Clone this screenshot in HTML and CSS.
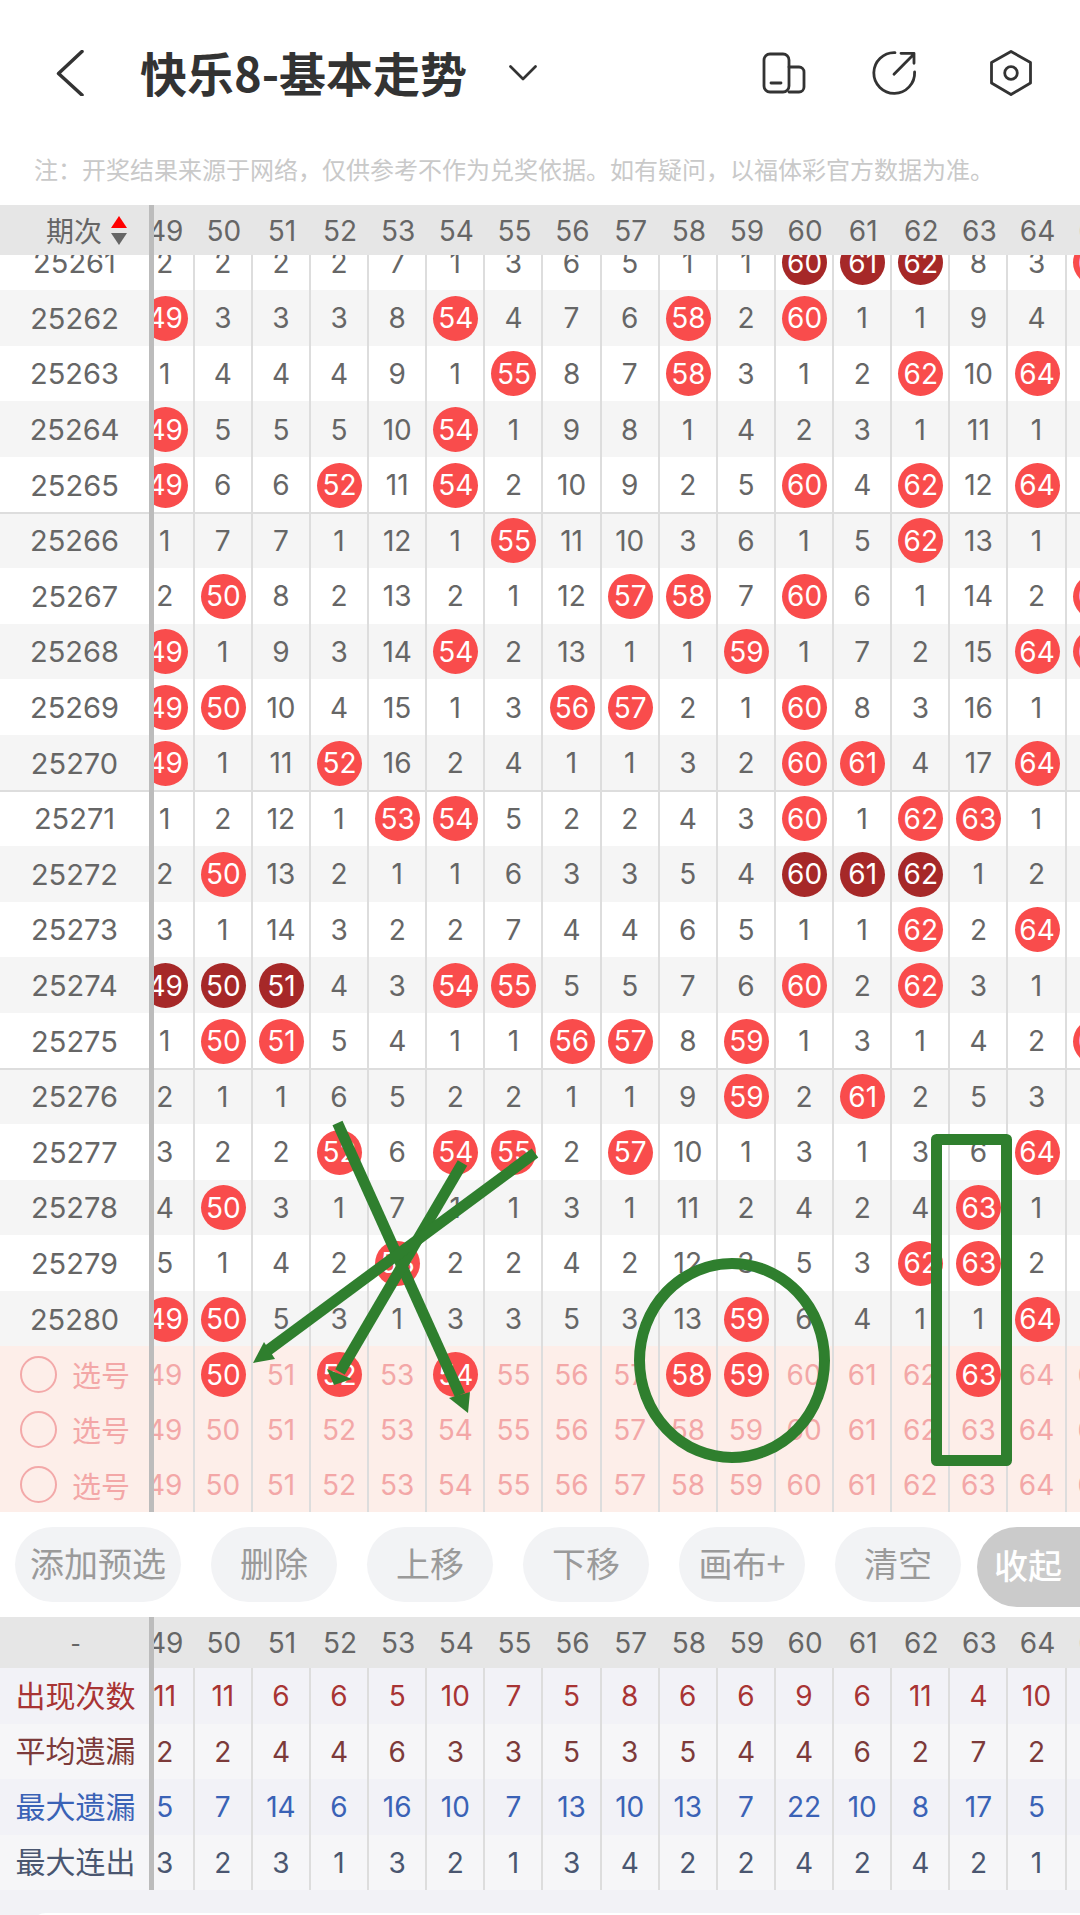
FILE: index.html
```html
<!DOCTYPE html>
<html lang="zh-CN">
<head>
<meta charset="utf-8">
<title>快乐8-基本走势</title>
<link rel="stylesheet" href="styles.css">
</head>
<body>
<div class="page">
  <header class="top">
    <svg class="back" viewBox="0 0 28 46"><path d="M26 1.5 2.5 23.5 26 45"/></svg>
    <h1>快乐8-基本走势</h1>
    <svg class="caret" viewBox="0 0 28 16"><path d="M1.5 1.5 14 14 26.500 1.500"/></svg>
    <svg class="ico ico1" viewBox="0 0 46 46"><rect x="3" y="4" width="25" height="38" rx="6"/><path d="M28 17h10a5 5 0 0 1 5 5v15a5 5 0 0 1-5 5H28M10 33h10"/></svg>
    <svg class="ico ico2" viewBox="0 0 46 46"><path d="M43.600 22A20.400 20.400 0 1 1 24 2.600M23 24.300 43 4M30 3.300H43V13.300"/></svg>
    <svg class="ico ico3" viewBox="0 0 46 48"><path d="M23 2.500 42.500 13.500V34L23 45.500 3.500 34V13.500Z"/><circle cx="23" cy="24" r="6.300"/></svg>
  </header>
  <p class="note">注：开奖结果来源于网络，仅供参考不作为兑奖依据。如有疑问，以福体彩官方数据为准。</p>

  <div class="r head">
    <div class="k"><span>期次</span><span class="sort"><em class="up"></em><em class="dn"></em></span></div>
    <div class="n"><i>49</i><i>50</i><i>51</i><i>52</i><i>53</i><i>54</i><i>55</i><i>56</i><i>57</i><i>58</i><i>59</i><i>60</i><i>61</i><i>62</i><i>63</i><i>64</i><i>65</i></div>
  </div>

  <div class="body">
    <div class="draws">
      <div class="r"><div class="k">25261</div><div class="n"><i>2</i><i>2</i><i>2</i><i>2</i><i>7</i><i>1</i><i>3</i><i>6</i><i>5</i><i>1</i><i>1</i><i><b class="d">60</b></i><i><b class="d">61</b></i><i><b class="d">62</b></i><i>8</i><i>3</i><i><b>65</b></i></div></div>
      <div class="r"><div class="k">25262</div><div class="n"><i><b>49</b></i><i>3</i><i>3</i><i>3</i><i>8</i><i><b>54</b></i><i>4</i><i>7</i><i>6</i><i><b>58</b></i><i>2</i><i><b>60</b></i><i>1</i><i>1</i><i>9</i><i>4</i><i></i></div></div>
      <div class="r"><div class="k">25263</div><div class="n"><i>1</i><i>4</i><i>4</i><i>4</i><i>9</i><i>1</i><i><b>55</b></i><i>8</i><i>7</i><i><b>58</b></i><i>3</i><i>1</i><i>2</i><i><b>62</b></i><i>10</i><i><b>64</b></i><i></i></div></div>
      <div class="r"><div class="k">25264</div><div class="n"><i><b>49</b></i><i>5</i><i>5</i><i>5</i><i>10</i><i><b>54</b></i><i>1</i><i>9</i><i>8</i><i>1</i><i>4</i><i>2</i><i>3</i><i>1</i><i>11</i><i>1</i><i></i></div></div>
      <div class="r"><div class="k">25265</div><div class="n"><i><b>49</b></i><i>6</i><i>6</i><i><b>52</b></i><i>11</i><i><b>54</b></i><i>2</i><i>10</i><i>9</i><i>2</i><i>5</i><i><b>60</b></i><i>4</i><i><b>62</b></i><i>12</i><i><b>64</b></i><i></i></div></div>
      <div class="r sep"><div class="k">25266</div><div class="n"><i>1</i><i>7</i><i>7</i><i>1</i><i>12</i><i>1</i><i><b>55</b></i><i>11</i><i>10</i><i>3</i><i>6</i><i>1</i><i>5</i><i><b>62</b></i><i>13</i><i>1</i><i></i></div></div>
      <div class="r"><div class="k">25267</div><div class="n"><i>2</i><i><b>50</b></i><i>8</i><i>2</i><i>13</i><i>2</i><i>1</i><i>12</i><i><b>57</b></i><i><b>58</b></i><i>7</i><i><b>60</b></i><i>6</i><i>1</i><i>14</i><i>2</i><i><b>65</b></i></div></div>
      <div class="r"><div class="k">25268</div><div class="n"><i><b>49</b></i><i>1</i><i>9</i><i>3</i><i>14</i><i><b>54</b></i><i>2</i><i>13</i><i>1</i><i>1</i><i><b>59</b></i><i>1</i><i>7</i><i>2</i><i>15</i><i><b>64</b></i><i><b>65</b></i></div></div>
      <div class="r"><div class="k">25269</div><div class="n"><i><b>49</b></i><i><b>50</b></i><i>10</i><i>4</i><i>15</i><i>1</i><i>3</i><i><b>56</b></i><i><b>57</b></i><i>2</i><i>1</i><i><b>60</b></i><i>8</i><i>3</i><i>16</i><i>1</i><i></i></div></div>
      <div class="r"><div class="k">25270</div><div class="n"><i><b>49</b></i><i>1</i><i>11</i><i><b>52</b></i><i>16</i><i>2</i><i>4</i><i>1</i><i>1</i><i>3</i><i>2</i><i><b>60</b></i><i><b>61</b></i><i>4</i><i>17</i><i><b>64</b></i><i></i></div></div>
      <div class="r sep"><div class="k">25271</div><div class="n"><i>1</i><i>2</i><i>12</i><i>1</i><i><b>53</b></i><i><b>54</b></i><i>5</i><i>2</i><i>2</i><i>4</i><i>3</i><i><b>60</b></i><i>1</i><i><b>62</b></i><i><b>63</b></i><i>1</i><i></i></div></div>
      <div class="r"><div class="k">25272</div><div class="n"><i>2</i><i><b>50</b></i><i>13</i><i>2</i><i>1</i><i>1</i><i>6</i><i>3</i><i>3</i><i>5</i><i>4</i><i><b class="d">60</b></i><i><b class="d">61</b></i><i><b class="d">62</b></i><i>1</i><i>2</i><i></i></div></div>
      <div class="r"><div class="k">25273</div><div class="n"><i>3</i><i>1</i><i>14</i><i>3</i><i>2</i><i>2</i><i>7</i><i>4</i><i>4</i><i>6</i><i>5</i><i>1</i><i>1</i><i><b>62</b></i><i>2</i><i><b>64</b></i><i></i></div></div>
      <div class="r"><div class="k">25274</div><div class="n"><i><b class="d">49</b></i><i><b class="d">50</b></i><i><b class="d">51</b></i><i>4</i><i>3</i><i><b>54</b></i><i><b>55</b></i><i>5</i><i>5</i><i>7</i><i>6</i><i><b>60</b></i><i>2</i><i><b>62</b></i><i>3</i><i>1</i><i></i></div></div>
      <div class="r"><div class="k">25275</div><div class="n"><i>1</i><i><b>50</b></i><i><b>51</b></i><i>5</i><i>4</i><i>1</i><i>1</i><i><b>56</b></i><i><b>57</b></i><i>8</i><i><b>59</b></i><i>1</i><i>3</i><i>1</i><i>4</i><i>2</i><i><b>65</b></i></div></div>
      <div class="r sep"><div class="k">25276</div><div class="n"><i>2</i><i>1</i><i>1</i><i>6</i><i>5</i><i>2</i><i>2</i><i>1</i><i>1</i><i>9</i><i><b>59</b></i><i>2</i><i><b>61</b></i><i>2</i><i>5</i><i>3</i><i></i></div></div>
      <div class="r"><div class="k">25277</div><div class="n"><i>3</i><i>2</i><i>2</i><i><b>52</b></i><i>6</i><i><b>54</b></i><i><b>55</b></i><i>2</i><i><b>57</b></i><i>10</i><i>1</i><i>3</i><i>1</i><i>3</i><i>6</i><i><b>64</b></i><i></i></div></div>
      <div class="r"><div class="k">25278</div><div class="n"><i>4</i><i><b>50</b></i><i>3</i><i>1</i><i>7</i><i>1</i><i>1</i><i>3</i><i>1</i><i>11</i><i>2</i><i>4</i><i>2</i><i>4</i><i><b>63</b></i><i>1</i><i></i></div></div>
      <div class="r"><div class="k">25279</div><div class="n"><i>5</i><i>1</i><i>4</i><i>2</i><i><b>53</b></i><i>2</i><i>2</i><i>4</i><i>2</i><i>12</i><i>3</i><i>5</i><i>3</i><i><b>62</b></i><i><b>63</b></i><i>2</i><i></i></div></div>
      <div class="r"><div class="k">25280</div><div class="n"><i><b>49</b></i><i><b>50</b></i><i>5</i><i>3</i><i>1</i><i>3</i><i>3</i><i>5</i><i>3</i><i>13</i><i><b>59</b></i><i>6</i><i>4</i><i>1</i><i>1</i><i><b>64</b></i><i></i></div></div>
    </div>
    <div class="picks">
      <div class="r"><div class="k"><span class="radio"></span><span>选号</span></div><div class="n"><i>49</i><i><b>50</b></i><i>51</i><i><b>52</b></i><i>53</i><i><b>54</b></i><i>55</i><i>56</i><i>57</i><i><b>58</b></i><i><b>59</b></i><i>60</i><i>61</i><i>62</i><i><b>63</b></i><i>64</i><i>65</i></div></div>
      <div class="r"><div class="k"><span class="radio"></span><span>选号</span></div><div class="n"><i>49</i><i>50</i><i>51</i><i>52</i><i>53</i><i>54</i><i>55</i><i>56</i><i>57</i><i>58</i><i>59</i><i>60</i><i>61</i><i>62</i><i>63</i><i>64</i><i>65</i></div></div>
      <div class="r"><div class="k"><span class="radio"></span><span>选号</span></div><div class="n"><i>49</i><i>50</i><i>51</i><i>52</i><i>53</i><i>54</i><i>55</i><i>56</i><i>57</i><i>58</i><i>59</i><i>60</i><i>61</i><i>62</i><i>63</i><i>64</i><i>65</i></div></div>
    </div>
  </div>

  <div class="actions">
    <button class="wide">添加预选</button>
    <button>删除</button>
    <button>上移</button>
    <button>下移</button>
    <button>画布+</button>
    <button>清空</button>
    <button class="fold">收起</button>
  </div>

  <div class="stats">
    <div class="r head"><div class="k">-</div><div class="n"><i>49</i><i>50</i><i>51</i><i>52</i><i>53</i><i>54</i><i>55</i><i>56</i><i>57</i><i>58</i><i>59</i><i>60</i><i>61</i><i>62</i><i>63</i><i>64</i><i>65</i></div></div>
    <div class="r s1"><div class="k">出现次数</div><div class="n"><i>11</i><i>11</i><i>6</i><i>6</i><i>5</i><i>10</i><i>7</i><i>5</i><i>8</i><i>6</i><i>6</i><i>9</i><i>6</i><i>11</i><i>4</i><i>10</i><i></i></div></div>
    <div class="r s2"><div class="k">平均遗漏</div><div class="n"><i>2</i><i>2</i><i>4</i><i>4</i><i>6</i><i>3</i><i>3</i><i>5</i><i>3</i><i>5</i><i>4</i><i>4</i><i>6</i><i>2</i><i>7</i><i>2</i><i></i></div></div>
    <div class="r s3"><div class="k">最大遗漏</div><div class="n"><i>5</i><i>7</i><i>14</i><i>6</i><i>16</i><i>10</i><i>7</i><i>13</i><i>10</i><i>13</i><i>7</i><i>22</i><i>10</i><i>8</i><i>17</i><i>5</i><i></i></div></div>
    <div class="r s4"><div class="k">最大连出</div><div class="n"><i>3</i><i>2</i><i>3</i><i>1</i><i>3</i><i>2</i><i>1</i><i>3</i><i>4</i><i>2</i><i>2</i><i>4</i><i>2</i><i>4</i><i>2</i><i>1</i><i></i></div></div>
  </div>
  <div class="foot"><div class="card"></div></div>

  <svg class="marks" viewBox="0 0 1080 1915">
    <path class="ln" d="M337.500 1123 460 1395"/>
    <polygon class="hd" points="468,1413 449,1398 470,1392"/>
    <path class="ln" d="M462.500 1163 340 1372"/>
    <polygon class="hd" points="334,1385 327,1369 352,1379"/>
    <path class="ln" d="M535 1153 267 1351"/>
    <polygon class="hd" points="253,1363 264,1342 275,1359"/>
    <ellipse class="ln" cx="732" cy="1360.500" rx="92.500" ry="97"/>
    <rect class="ln box" x="936.500" y="1139.500" width="70" height="321"/>
  </svg>
</div>
</body>
</html>
```
FILE: styles.css
```css
* { box-sizing: border-box; }
html, body { margin: 0; padding: 0; background: #fff; }
.page {
  position: relative;
  width: 1080px;
  height: 1915px;
  overflow: hidden;
  font-family: "Noto Sans CJK SC", "Noto Sans", sans-serif;
  color: #666;
}

/* top bar */
.top { display: flex; align-items: center; height: 146px; padding: 0 46px 0 56px; }
.top svg { fill: none; stroke: #333; stroke-linecap: round; stroke-linejoin: round; flex: none; }
.back { width: 28px; height: 46px; margin-right: 56px; stroke-width: 3.5; }
.top h1 { margin: 0 0 3px; font-size: 47px; font-weight: 700; color: #333; line-height: 1; white-space: nowrap; }
.caret { width: 28px; height: 16px; margin-left: 42px; stroke-width: 2.7; }
.ico { width: 46px; height: 46px; stroke-width: 2.8; }
.ico3 { height: 48px; }
.ico1 { margin-left: auto; }
.ico2 { margin-left: 64px; }
.ico3 { margin-left: 71px; }

.note { margin: 0; height: 59px; padding: 7px 0 0 34px; font-size: 24px; line-height: 32px; color: #c9c9c9; white-space: nowrap; }

/* table rows */
.r { display: flex; height: 55.6px; background: #fff; }
.k {
  flex: 0 0 154px;
  display: flex;
  align-items: center;
  justify-content: center;
  padding-top: 1px;
  border-right: 5px solid #bcbcbc;
  font-family: Inter, "Noto Sans CJK SC", sans-serif;
  font-size: 29px;
}
.n { flex: 1; min-width: 0; display: flex; overflow: hidden; }
.n i {
  flex: 0 0 58.13px;
  display: flex;
  align-items: center;
  justify-content: center;
  padding-top: 1px;
  border-right: 2px solid #ddd;
  font: normal 28px/1 Inter, "Noto Sans", sans-serif;
}
.n i:first-child { margin-left: -17.400px; }
.n b {
  flex: none;
  width: 45px;
  height: 45px;
  border-radius: 50%;
  display: flex;
  align-items: center;
  justify-content: center;
  margin-right: -1px;
  background: #f94c4c;
  color: #fff;
  font-weight: 400;
}
.n b.d { background: #a62828; }

.head { height: 50px; background: #e6e6e6; }
.head .k { justify-content: flex-start; padding: 0 0 0 46px; font-family: "Noto Sans CJK SC", sans-serif; font-size: 28px; }
.head .n i { border-right: 0; }
.sort { display: flex; flex-direction: column; gap: 5px; margin-left: 9px; }
.sort em { display: block; width: 0; height: 0; border-left: 8px solid transparent; border-right: 8px solid transparent; }
.sort .up { border-bottom: 12px solid #f00; }
.sort .dn { border-top: 12px solid #666; }

.body { height: 1257px; overflow: hidden; }
.draws { margin-top: -20.500px; }
.draws .r:nth-child(even) { background: #f5f5f5; }
.draws .r.sep { box-shadow: inset 0 2px #ddd; }

.picks .r { height: 55.330px; background: #fdeee9; color: #f3a7a7; }
.picks .k { font-family: "Noto Sans CJK SC", sans-serif; justify-content: flex-start; padding: 0 0 0 20px; font-size: 29px; gap: 15px; }
.radio { flex: none; width: 37px; height: 37px; border: 2px solid #f3a9a9; border-radius: 50%; }

/* buttons */
.actions { display: flex; align-items: flex-start; gap: 30px; height: 105px; padding: 15px 0 0 15px; }
.actions button {
  flex: 0 0 126px;
  height: 75px;
  padding: 0 0 4px;
  border: 0;
  border-radius: 38px;
  background: #f2f3f5;
  color: #9a9a9a;
  font: 400 34px/1 "Noto Sans CJK SC", sans-serif;
  white-space: nowrap;
}
.actions .wide { flex-basis: 166px; }
.actions .fold { flex: 0 0 120px; height: 80px; margin-left: -14px; border-radius: 40px 0 0 40px; padding: 0 0 5px 17px; text-align: left; background: #cbcbcb; color: #fff; font-weight: 500; }

/* stats */
.stats .head { height: 51px; }
.stats .r { background: #f6f6f8; }
.stats .head { background: #e6e6e6; }
.stats .r:not(.head) { height: 55.500px; }
.stats .k { font-family: "Noto Sans CJK SC", sans-serif; font-size: 30px; padding: 0 0 4px 2px; justify-content: center; }
.stats .head .k { font-size: 28px; }
.stats .s1, .stats .s3 { background: #f2f2f7; }
.s1 { color: #a83434; }
.s2 { color: #7c3a3a; }
.s3 { color: #3a62b6; }
.s4 { color: #4a5670; }

.foot { height: 25px; padding: 23px 0 0 30px; background: #f2f2f6; }
.card { height: 20px; border-radius: 16px 0 0 0; background: #fff; }

/* hand-drawn annotations lying over the table */
.marks { position: absolute; left: 0; top: 0; width: 1080px; height: 1915px; pointer-events: none; }
.ln { fill: none; stroke: #2f7f2e; stroke-width: 11; }
.hd { fill: #2f7f2e; }
.box { stroke-linejoin: round; }
```
